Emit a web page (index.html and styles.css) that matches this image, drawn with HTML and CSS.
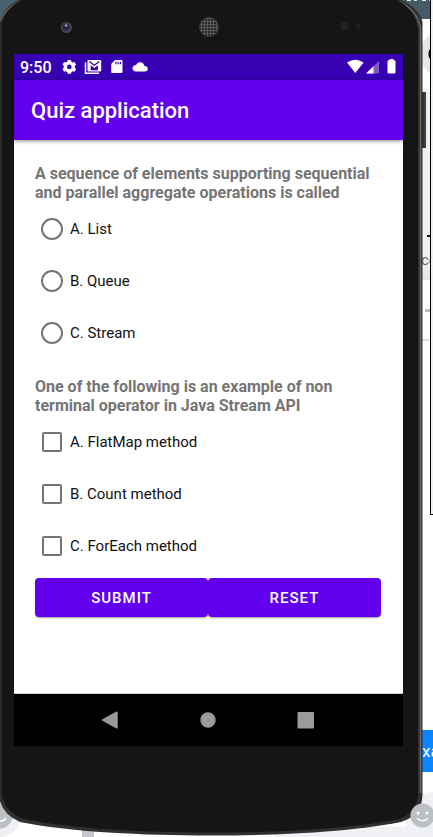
FILE: index.html
```html
<!DOCTYPE html>
<html lang="en">
<head>
<meta charset="utf-8">
<meta name="viewport" content="width=device-width, initial-scale=1">
<title>Quiz application</title>
<link rel="stylesheet" href="styles.css">
</head>
<body>
<div class="device">
  <svg class="backdrop" viewBox="0 0 433 837" preserveAspectRatio="none" aria-hidden="true">
    <defs>
      <pattern id="mesh" width="3" height="3" patternUnits="userSpaceOnUse">
        <rect width="3" height="3" fill="#5a5a5a"/>
        <rect x="1" y="1" width="2" height="2" rx="1" fill="#161616"/>
      </pattern>
      <linearGradient id="fade" x2="0" y2="1"><stop stop-color="#ececf0"/><stop offset="1" stop-color="#e4e4ea"/></linearGradient>
      <clipPath id="window"><rect width="430" height="837"/></clipPath>
    </defs>
    <rect width="433" height="837" fill="#fff"/>
    <g clip-path="url(#window)">
      <rect width="40" height="20" fill="#4a6270"/>
      <rect x="385" width="45" height="19" fill="#455b66"/>
      <path d="M407 .5h10M422 .5h8" stroke="#e6e9d8" stroke-dasharray="4 3"/>
      <circle cx="443" cy="54" r="23" fill="#e4e6eb"/>
      <ellipse cx="431" cy="54" rx="2.500" ry="5" fill="#050505"/>
      <rect x="418" y="89" width="12" height="191" fill="#f0eff4"/>
      <rect x="418" y="265" width="12" height="15" fill="url(#fade)"/>
      <path d="M427 236h4" stroke="#111" stroke-width="2"/>
      <text x="421" y="265" class="side-note">co</text>
      <path d="M425 310.500h5" stroke="#b9bdc5" stroke-width="3"/>
      <path d="M421 340h9" stroke="#dedfe2" stroke-width="2"/>
    </g>
    <rect x="431" width="2" height="514" fill="#f0f0f0"/>
    <path d="M430.500 0v514.500H433" fill="none" stroke="#000"/>
    <rect x="418" y="730" width="15" height="42" fill="#0a84ff"/>
    <text x="422" y="757" class="side-button">xa</text>
    <path d="M275 837v-10h130q5-35 28-35v45z" fill="#f0f1f5"/>
    <circle cx="0" cy="816" r="21" fill="#eff0f4"/>
    <circle cx="0" cy="816" r="12.500" fill="#bcc0c4"/>
    <path d="M0 821q4 0 6-3" stroke="#fff" stroke-width="1.500" fill="none"/>
    <rect x="82" y="830" width="12" height="7" fill="#c6c7cb"/>

    <rect x="420" y="92" width="6" height="56" rx="1" fill="#333"/>
    <path d="M425 94v52" stroke="#55514f"/>
    <path d="M-1 22Q5 3 27-3H393Q418 5 422.500 22V795Q422 815 401 822C350 832 280 835.500 211 835.500S70 832 20 822Q3 815-1 798Z" fill="#303030"/>
    <path d="M0 21Q7 5 25 0M395 0Q417 8 420.500 28V793" fill="none" stroke="#666" stroke-width="1.500"/>
    <path d="M1.500 24Q7 4 29-3H391Q414 6 418 29V793Q418 812 399 819C350 829 280 832.500 211 832.500S74 829 24 819Q6 813 1.500 795Z" fill="#151515"/>
    <path d="M.500 22V798" stroke="#303030"/>
    <circle cx="422.500" cy="815.500" r="12" fill="#bcc0c4"/>
    <circle cx="418" cy="813" r="1.500" fill="#fff"/><circle cx="427" cy="813" r="1.500" fill="#fff"/>
    <path d="M417 818.500q5.500 4.500 11 0" stroke="#fff" stroke-width="1.500" fill="none"/>
    <circle cx="66.500" cy="27.500" r="5.500" fill="#464646"/>
    <circle cx="66" cy="27" r="3.500" fill="#242448"/>
    <circle cx="66" cy="25.500" r="1.200" fill="#a6a6b5"/>
    <circle cx="209" cy="27" r="9.500" fill="url(#mesh)" stroke="#393939"/>
    <circle cx="344.500" cy="26" r="4" fill="#222"/>
    <circle cx="358.500" cy="26" r="2.500" fill="#222"/>
  </svg>

  <div class="screen">
    <div class="status">
      <time>9:50</time>
      <svg class="notices" viewBox="0 0 88 16" aria-hidden="true" fill="#fff">
        <path fill-rule="evenodd" d="M5.700 1h3.200l.5 1.800 1.300.7 1.800-.5 1.600 2.700-1.300 1.400v1.600l1.300 1.300-1.600 2.700-1.800-.5-1.300.8-.5 1.800H5.700l-.5-1.800-1.300-.8-1.800.5L.5 10l1.300-1.300V7.100L.5 5.700 2.100 3l1.800.5 1.300-.7zM7.300 5.600a2.300 2.300 0 1 0 0 4.600 2.300 2.300 0 0 0 0-4.600z"/>
        <path d="M23.500 3.500v10.700H37" fill="none" stroke="#fff" stroke-width="1.500"/>
        <rect x="25.500" y="1" width="13.700" height="11.500" rx="1.200"/>
        <path d="M27.300 2.600l5 3.700 5-3.700" fill="none" stroke="#3700b3" stroke-width="1.300"/>
        <path d="M28.700 11.200V6.300l3.600 2.600 3.600-2.600v4.900z" fill="#3700b3"/>
        <path fill-rule="evenodd" d="M53 1h6.500q1 0 1 1v11q0 1-1 1H50.200q-1 0-1-1V5zm.2 1.800v2.400h1.200V2.800zm2.300 0v2.400h1.200V2.800zm2.300 0v2.400H59V2.800z"/>
        <path d="M74 12.500q-3.500-.3-3.500-3.300Q70.800 6.300 74 6q1.500-3 4.300-2.700Q81.500 3.500 82.500 7q3.300.2 3.300 2.800 0 2.700-3 2.700z"/>
      </svg>
      <svg class="signals" viewBox="0 0 50 16" aria-hidden="true" fill="#fff">
        <path d="M1 3.500Q9.200-1.800 17.600 3.500L9.300 14z"/>
        <path d="M20 14.500L33 2v12.500z" fill="#7d5bcb"/>
        <path d="M20 14.500l7.500-7.200v7.200z"/>
        <path d="M43.500 0h4v1.200h1q1 0 1 1V13.500q0 1-1 1h-6q-1 0-1-1V2.200q0-1 1-1h1z"/>
      </svg>
    </div>
    <header class="app-bar"><h1>Quiz application</h1></header>
    <form class="quiz" onsubmit="return false">
      <fieldset>
        <legend>A sequence of elements supporting sequential and parallel aggregate operations is called</legend>
        <label><input type="radio" name="q1">A. List</label>
        <label><input type="radio" name="q1">B. Queue</label>
        <label><input type="radio" name="q1">C. Stream</label>
      </fieldset>
      <fieldset>
        <legend>One of the following is an example of non terminal operator in Java Stream API</legend>
        <label><input type="checkbox" name="q2">A. FlatMap method</label>
        <label><input type="checkbox" name="q2">B. Count method</label>
        <label><input type="checkbox" name="q2">C. ForEach method</label>
      </fieldset>
      <div class="actions">
        <button type="submit">SUBMIT</button>
        <button type="reset">RESET</button>
      </div>
    </form>
    <nav class="nav-bar">
      <button type="button" aria-label="Back"><svg viewBox="0 0 18 18"><path d="M1 8.500L15.500.5q1.200-.5 1.200 1v15q0 1.500-1.200 1L1 9.500q-.8-.5 0-1z"/></svg></button>
      <button type="button" aria-label="Home"><svg viewBox="0 0 18 18"><circle cx="9" cy="9" r="7.700"/></svg></button>
      <button type="button" aria-label="Recent apps"><svg viewBox="0 0 18 18"><rect x=".5" y="1" width="16.500" height="16.500" rx="1"/></svg></button>
    </nav>
  </div>
</div>
</body>
</html>
```
FILE: styles.css
```css
* { box-sizing: border-box; }

body {
  margin: 0;
  font-family: Roboto, "Liberation Sans", sans-serif;
  background: #fff;
}

.device {
  position: relative;
  display: flex;
  min-height: 100vh;
  padding: 54px 30px 91px 14px;
}

.backdrop {
  position: absolute;
  inset: 0;
  width: 100%;
  height: 100%;
}

.side-note { font-size: 15px; fill: #65676b; }
.side-button { font-size: 17px; fill: #fff; }

.screen {
  position: relative;
  flex: 1;
  display: flex;
  flex-direction: column;
  background: #fff;
}

.status {
  display: flex;
  align-items: center;
  height: 26px;
  padding: 0 7px 0 6px;
  background: #3700b3;
  color: #fff;
}

.status time { font-size: 16px; font-weight: 500; width: 42px; }
.notices { width: 88px; height: 16px; }
.signals { width: 50px; height: 16px; margin-left: auto; }

.app-bar {
  display: flex;
  align-items: center;
  height: 60px;
  padding: 0 17px;
  background: #6200ee;
  color: #fff;
  box-shadow: 0 1px 4px rgba(0, 0, 0, .45);
}

h1 { margin: 0; font-size: 22px; font-weight: 500; }

.quiz {
  flex: 1;
  padding: 24px 22px 0 21px;
  border-bottom: 1px solid #ccc;
}

fieldset {
  margin: 0 0 18px;
  padding: 0;
  border: 0;
  min-width: 0;
}

fieldset + fieldset { margin-bottom: 6px; }

legend {
  padding: 0 0 1px;
  font-size: 16px;
  font-weight: 700;
  line-height: 19px;
  color: #757575;
}

label {
  display: flex;
  align-items: center;
  gap: 7px;
  height: 52px;
  padding-left: 6px;
  font-size: 15px;
  color: #111;
}

input {
  appearance: none;
  flex: none;
  margin: 0;
  border: 2px solid #757575;
  background: #fff;
}

input[type="radio"] { width: 22px; height: 22px; border-radius: 50%; }
input[type="radio"]:checked { background: #6200ee; box-shadow: inset 0 0 0 4px #fff; }
input[type="checkbox"] { width: 20px; height: 20px; margin: 0 1px; border-radius: 2px; }
input[type="checkbox"]:checked { background: #6200ee; }

.actions { display: flex; }

.actions button {
  flex: 1 1 auto;
  height: 39px;
  padding: 0 50px;
  border: 0;
  border-radius: 4px;
  background: #6200ee;
  color: #fff;
  font: 500 15px Roboto, "Liberation Sans", sans-serif;
  letter-spacing: 1px;
  box-shadow: 0 2px 2px -1px rgba(0, 0, 0, .4);
}

.actions button { flex-basis: 0; }

.nav-bar {
  display: flex;
  justify-content: center;
  align-items: center;
  gap: 80px;
  height: 52px;
  padding-right: 2px;
  background: #000;
}

.nav-bar button {
  display: flex;
  padding: 0;
  border: 0;
  background: none;
}

.nav-bar svg { width: 18px; height: 18px; fill: #9b9b9b; }
```
